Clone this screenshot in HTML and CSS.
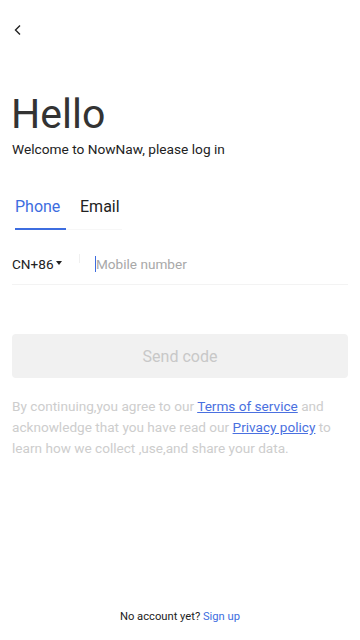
FILE: index.html
```html
<!DOCTYPE html>
<html lang="en">
<head>
<meta charset="utf-8">
<meta name="viewport" content="width=device-width, initial-scale=1">
<title>Log in</title>
<link rel="stylesheet" href="styles.css">
</head>
<body>
<div class="page">
  <header class="topbar">
    <svg class="back" width="10" height="12" viewBox="0 0 10 12" aria-hidden="true"><path d="M7 1.5 L2.5 6 L7 10.5" fill="none" stroke="#222" stroke-width="1.4"/></svg>
  </header>
  <h1 class="title">Hello</h1>
  <p class="subtitle">Welcome to NowNaw, please log in</p>
  <nav class="tabs">
    <span class="tab active">Phone</span>
    <span class="tab">Email</span>
  </nav>
  <div class="phone-row">
    <span class="country">CN+86<span class="caret"></span></span>
    <span class="vsep"></span>
    <span class="cursor"></span>
    <span class="placeholder">Mobile number</span>
  </div>
  <button class="send" type="button">Send code</button>
  <p class="terms">By continuing,you agree to our <a href="#">Terms of service</a> and acknowledge that you have read our <a href="#">Privacy policy</a> to learn how we collect ,use,and share your data.</p>
  <footer class="footer">No account yet? <a href="#">Sign up</a></footer>
</div>
</body>
</html>
```
FILE: styles.css
```css
* { box-sizing: border-box; }
html, body { margin: 0; padding: 0; }
body {
  font-family: Roboto, "Liberation Sans", sans-serif;
  background: #fff;
  color: #222;
}
.page {
  width: 360px;
  height: 640px;
  display: flex;
  flex-direction: column;
}
.topbar {
  height: 60px;
  padding: 24px 0 0 13px;
}
.back { display: block; }
.title {
  margin: 32px 0 0 11px;
  font-size: 41px;
  line-height: 44px;
  font-weight: 400;
  color: #333;
}
.subtitle {
  margin: 3px 0 0 12px;
  font-size: 13.7px;
  line-height: 20px;
  color: #222;
}
.tabs {
  margin: 38px 0 0 15px;
  width: 107px;
  display: flex;
  gap: 14px;
  border-bottom: 1px solid #f7f7f7;
}
.tab {
  font-size: 16px;
  line-height: 20px;
  padding-bottom: 11px;
  color: #222;
}
.tab.active {
  color: #3d6de0;
  width: 51px;
  border-bottom: 2px solid #3d6de0;
  margin-bottom: -1px;
}
.phone-row {
  margin: 14px 12px 0;
  height: 41px;
  display: flex;
  align-items: center;
  border-bottom: 1px solid #f3f3f3;
  font-size: 13.6px;
}
.country {
  color: #222;
  display: flex;
  align-items: center;
  width: 67px;
}
.caret {
  margin-left: 2px;
  width: 0;
  height: 0;
  border-left: 3px solid transparent;
  border-right: 3px solid transparent;
  border-top: 4px solid #222;
  transform: translateY(-1px);
}
.vsep {
  width: 1px;
  height: 9px;
  background: #f0f0f0;
  align-self: flex-start;
  margin-top: 10px;
}
.cursor {
  width: 1px;
  height: 16px;
  background: #3d6de0;
  margin-left: 15px;
}
.placeholder {
  color: #a8a8a8;
}
.send {
  margin: 49px 12px 0;
  height: 44px;
  border: 0;
  border-radius: 4px;
  background: #f1f1f1;
  color: #c8c8c8;
  font-family: Roboto, "Liberation Sans", sans-serif;
  font-size: 16px;
}
.terms {
  margin: 18px 12px 0;
  font-size: 13.6px;
  line-height: 21px;
  color: #cdcdcd;
}
.terms a {
  color: #4a70e0;
  text-decoration: underline;
}
.footer {
  margin-top: auto;
  margin-bottom: 15px;
  text-align: center;
  font-size: 11.2px;
  line-height: 16px;
  color: #222;
}
.footer a {
  color: #3d6de0;
  text-decoration: none;
}
```
